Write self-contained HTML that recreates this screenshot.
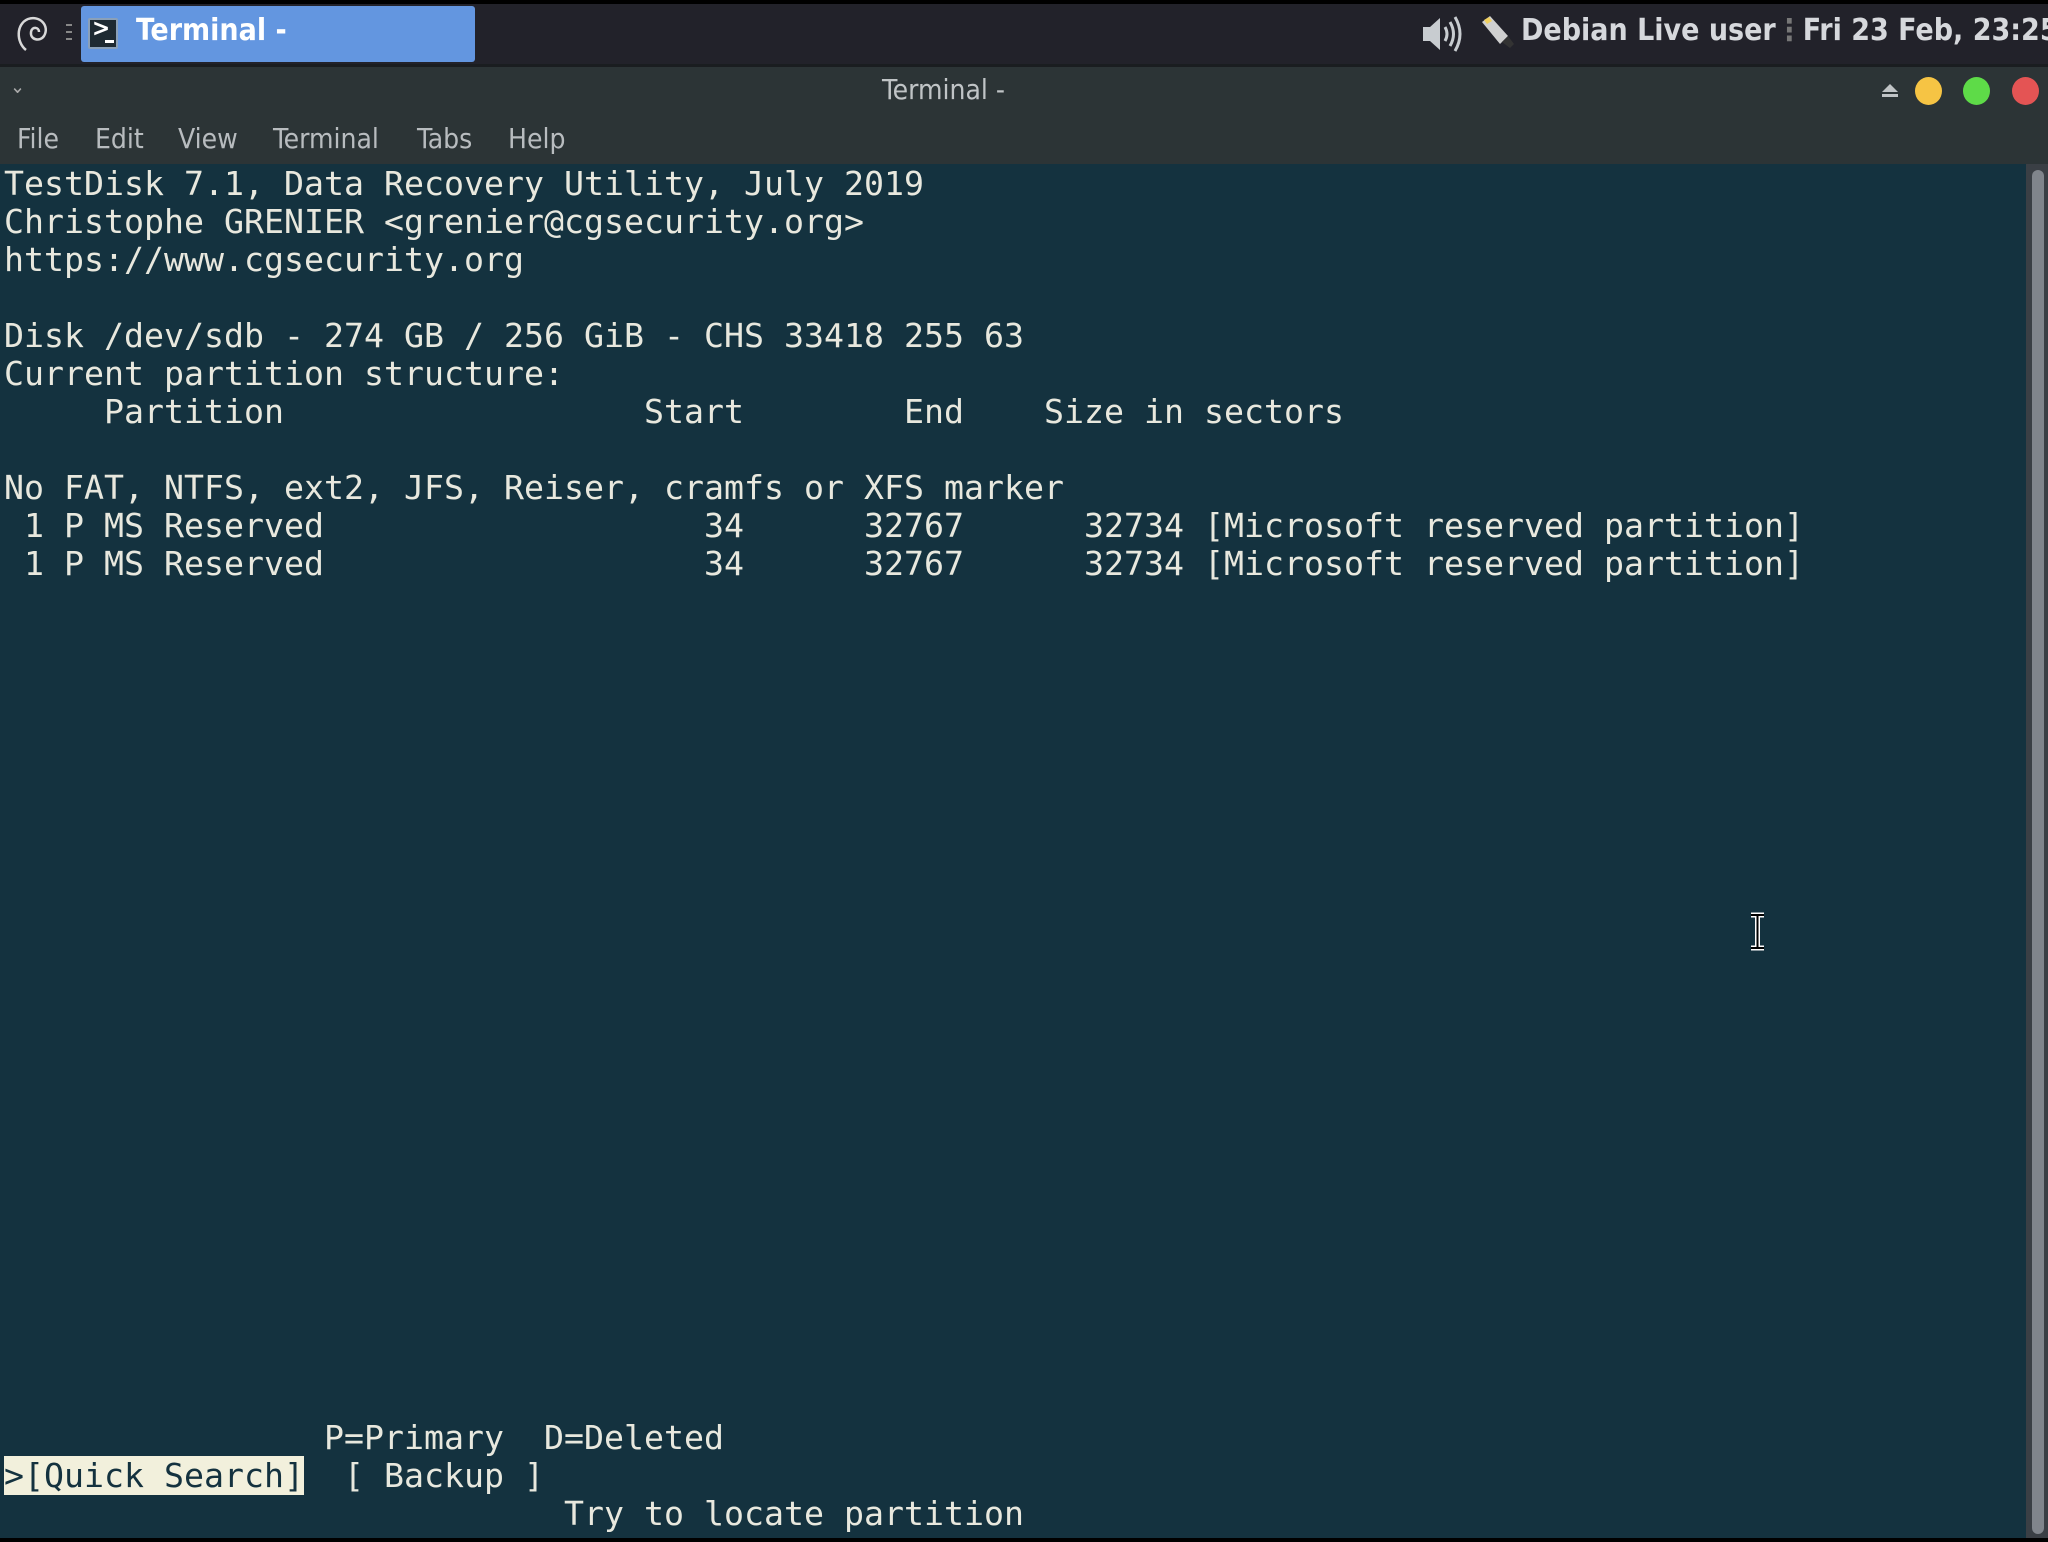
<!DOCTYPE html>
<html><head><meta charset="utf-8"><style>
html,body{margin:0;padding:0;width:2048px;height:1542px;overflow:hidden;background:#000;}
*{box-sizing:border-box;}
.task{position:absolute;left:0;top:4px;width:2048px;height:60px;background:#22222a;}
.tb{position:absolute;left:0;top:64px;width:2048px;height:100px;background:#2c3436;border-top:3px solid #1a1d20;}
.sans{font-family:"DejaVu Sans Condensed","DejaVu Sans","Liberation Sans",sans-serif;font-stretch:condensed;}
.term{position:absolute;left:0;top:164px;width:2026px;height:1374px;background:#14323f;}
.sb{position:absolute;left:2026px;top:164px;width:22px;height:1374px;background:#3a3f45;}
.thumb{position:absolute;left:2032px;top:170px;width:12px;height:1364px;background:#80858c;border-radius:6px;}
pre{position:absolute;left:4px;top:165px;margin:0;font-family:"DejaVu Sans Mono","Liberation Mono",monospace;font-size:33.22px;line-height:38px;color:#e8e8de;}
.hl{background:#f2f0dc;color:#14323f;}
.menu span{position:absolute;top:122px;font-size:28px;color:#b8bcbf;}
</style></head><body>
<div class="task"></div>
<svg style="position:absolute;left:12px;top:12px" width="40" height="44" viewBox="0 0 40 44"><path d="M14 38 C4 30 4 12 16 7 C28 3 38 14 32 24 C28 30 18 28 19 20 C20 14 27 15 27 20" fill="none" stroke="#d8d8d8" stroke-width="2.5"/></svg>
<div style="position:absolute;left:66px;top:24px;width:6px;height:2px;background:#888;box-shadow:0 7px 0 #888,0 14px 0 #888"></div>
<div style="position:absolute;left:81px;top:6px;width:394px;height:56px;background:#6396e0;border-radius:3px;"></div>
<div style="position:absolute;left:88px;top:18px;width:30px;height:31px;background:#1e2a32;border:2px solid #8aa0b8;border-radius:2px;"></div>
<div class="sans" style="position:absolute;left:92px;top:14px;font-size:24px;font-weight:bold;color:#fff;">&gt;</div>
<div style="position:absolute;left:105px;top:40px;width:9px;height:3px;background:#fff"></div>
<div class="sans" style="position:absolute;left:136px;top:13px;font-size:30px;font-weight:bold;color:#fff;">Terminal -</div>
<svg style="position:absolute;left:1420px;top:12px" width="50" height="44" viewBox="0 0 50 44"><path d="M3 15 H10 L20 6 V38 L10 29 H3 Z" fill="#c8ccd0"/><path d="M25 15 Q29 22 25 29 M30 10 Q37 22 30 34 M35 5 Q45 22 35 39" fill="none" stroke="#c8ccd0" stroke-width="3"/></svg>
<svg style="position:absolute;left:1478px;top:14px" width="40" height="40" viewBox="0 0 40 40"><path d="M4 8 L12 2 L30 22 L22 30 Z" fill="#d0d0d0"/><path d="M6 6 L11 3 L14 7 L9 10Z" fill="#f0d060"/><path d="M24 28 L30 22 L36 30 L32 34Z" fill="#333"/></svg>
<div class="sans" style="position:absolute;left:1521px;top:13px;font-size:30px;font-weight:bold;color:#d6d8dc;white-space:nowrap;">Debian Live user<span style="color:#777">⋮</span>Fri 23 Feb, 23:25</div>
<div class="tb"></div>
<div class="sans" style="position:absolute;left:10px;top:74px;font-size:20px;color:#aaa;">⌄</div>
<div class="sans" style="position:absolute;left:882px;top:73px;font-size:28px;color:#c0c4c6;">Terminal -</div>
<div style="position:absolute;left:1882px;top:84px;width:0;height:0;border-left:8px solid transparent;border-right:8px solid transparent;border-bottom:8px solid #c0c4c6"></div>
<div style="position:absolute;left:1882px;top:94px;width:16px;height:3px;background:#c0c4c6"></div>
<div style="position:absolute;left:1915px;top:77px;width:27px;height:28px;border-radius:50%;background:#f6c444"></div>
<div style="position:absolute;left:1963px;top:77px;width:27px;height:28px;border-radius:50%;background:#5edb48"></div>
<div style="position:absolute;left:2012px;top:77px;width:27px;height:28px;border-radius:50%;background:#e45454"></div>
<div class="menu sans"><span style="left:17px">File</span><span style="left:95px">Edit</span><span style="left:178px">View</span><span style="left:273px">Terminal</span><span style="left:417px">Tabs</span><span style="left:508px">Help</span></div>
<div class="term"></div>
<div class="sb"></div><div class="thumb"></div>
<pre>TestDisk 7.1, Data Recovery Utility, July 2019
Christophe GRENIER &lt;grenier@cgsecurity.org&gt;
https://www.cgsecurity.org

Disk /dev/sdb - 274 GB / 256 GiB - CHS 33418 255 63
Current partition structure:
     Partition                  Start        End    Size in sectors

No FAT, NTFS, ext2, JFS, Reiser, cramfs or XFS marker
 1 P MS Reserved                   34      32767      32734 [Microsoft reserved partition]
 1 P MS Reserved                   34      32767      32734 [Microsoft reserved partition]






















                P=Primary  D=Deleted
<span class="hl">&gt;[Quick Search]</span>  [ Backup ]
                            Try to locate partition</pre>
<svg style="position:absolute;left:1748px;top:912px" width="20" height="40" viewBox="0 0 20 40"><path d="M3 3 H16 M9.5 3 V36 M3 36 H16" fill="none" stroke="#fff" stroke-width="5"/><path d="M3 3 H16 M9.5 3 V36 M3 36 H16" fill="none" stroke="#000" stroke-width="2"/></svg>
</body></html>
